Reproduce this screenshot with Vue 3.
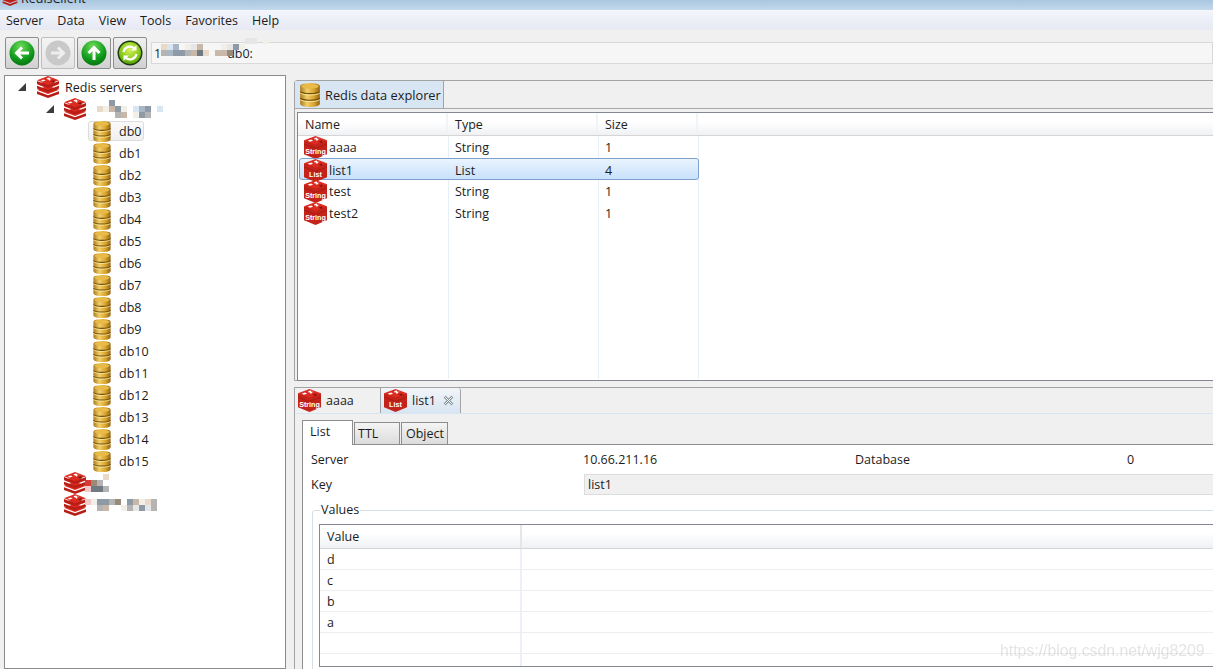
<template>
  <div class="app">
    <!-- sprite -->
    <svg class="sprite" width="0" height="0">
      <defs>
        <linearGradient id="gold" x1="0" x2="1" y1="0" y2="0">
          <stop offset="0" stop-color="#a97a1c" />
          <stop offset="0.35" stop-color="#f2cf6a" />
          <stop offset="0.7" stop-color="#d9a32e" />
          <stop offset="1" stop-color="#8f6414" />
        </linearGradient>
        <radialGradient id="greenBall" cx="0.45" cy="0.25" r="0.85">
          <stop offset="0" stop-color="#6fdc5a" />
          <stop offset="0.6" stop-color="#0f9a1c" />
          <stop offset="1" stop-color="#04660c" />
        </radialGradient>
        <radialGradient id="limeBall" cx="0.5" cy="0.35" r="0.7">
          <stop offset="0" stop-color="#d8f25a" />
          <stop offset="0.7" stop-color="#7fc414" />
          <stop offset="1" stop-color="#3d8a06" />
        </radialGradient>
      </defs>
      <symbol id="redis" viewBox="0 0 26 24">
        <path d="M1 16.500v3L13 24l12-4.500v-3L13 21z" fill="#b81e16" />
        <path d="M1 15l12-4.500 12 4.500-12 4.500z" fill="#d92a20" />
        <path d="M1 10.500v3L13 18l12-4.500v-3L13 15z" fill="#b81e16" />
        <path d="M1 9l12-4.500L25 9l-12 4.500z" fill="#d92a20" />
        <path d="M1 5.500v3L13 13l12-4.500v-3L13 10z" fill="#b81e16" />
        <path d="M1 4.500L13 0l12 4.500L13 9z" fill="#dc2c22" />
        <path d="M5 4.800l3.500-1.100 2 1.300-3.500 1.100zM12 2.200l2.500-.700.700 1.500 2-.300-2 1.400-.700 1.300-1-1.700-2-.300z" fill="#fff" />
        <path d="M16 6l4-1.600v3z" fill="#7c1610" />
      </symbol>
      <symbol id="rediskey" viewBox="0 0 26 24">
        <path d="M1 4.500v14.500L13 24l12-5V4.500z" fill="#c4231a" />
        <path d="M1 8.500L13 13l12-4.500" fill="none" stroke="#a81a13" stroke-width="1" />
        <path d="M1 4.500L13 0l12 4.500L13 9z" fill="#dc2c22" />
        <path d="M5 4.800l3.500-1.100 2 1.300-3.500 1.100zM12 2.200l2.500-.700.700 1.500 2-.300-2 1.400-.700 1.300-1-1.700-2-.300z" fill="#fff" />
        <path d="M16 6l4-1.600v3z" fill="#7c1610" />
      </symbol>
      <symbol id="db" viewBox="0 0 18 22">
        <path d="M0 3c0-4 18-4 18 0v16c0 4-18 4-18 0z" fill="url(#gold)" />
        <ellipse cx="9" cy="3" rx="8" ry="2.200" fill="#e8bb48" />
        <path d="M0 8c3 2.400 15 2.400 18 0M0 14c3 2.400 15 2.400 18 0" fill="none" stroke="#6e4c0c" stroke-width="1.100" />
        <path d="M0 9.200c3 2.400 15 2.400 18 0M0 15.200c3 2.400 15 2.400 18 0" fill="none" stroke="#fbe79a" stroke-width="0.800" />
      </symbol>
    </svg>

    <div class="titlebar">
      <svg class="title-icon"><use href="#redis" /></svg>
      <span>RedisClient</span>
    </div>

    <div class="menubar">
      <span v-for="m in menus" :key="m">{{ m }}</span>
    </div>

    <div class="toolbar">
      <button class="tool">
        <svg viewBox="0 0 26 26" width="26" height="26">
          <circle cx="13" cy="13" r="12.500" fill="url(#greenBall)" />
          <path d="M20 13H8M13 7.500L7.500 13l5.500 5.500" fill="none" stroke="#fff" stroke-width="3" />
        </svg>
      </button>
      <button class="tool off">
        <svg viewBox="0 0 26 26" width="26" height="26">
          <circle cx="13" cy="13" r="12.500" fill="#c9c9c9" />
          <path d="M6 13h12M13 7.500l5.500 5.500-5.500 5.500" fill="none" stroke="#eee" stroke-width="3" />
        </svg>
      </button>
      <button class="tool">
        <svg viewBox="0 0 26 26" width="26" height="26">
          <circle cx="13" cy="13" r="12.500" fill="url(#greenBall)" />
          <path d="M13 20V8M7.500 13L13 7.500l5.500 5.500" fill="none" stroke="#fff" stroke-width="3" />
        </svg>
      </button>
      <button class="tool">
        <svg viewBox="0 0 26 26" width="26" height="26">
          <circle cx="13" cy="13" r="12.500" fill="#1d3b12" />
          <circle cx="13" cy="13" r="11" fill="url(#limeBall)" />
          <path d="M6.500 12a6.500 6.500 0 0 1 11-3.500M19.500 14a6.500 6.500 0 0 1-11 3.500" fill="none" stroke="#fff" stroke-width="2.200" />
          <path d="M19.500 5v5.500H14zM6.500 21v-5.500H12z" fill="#fff" />
        </svg>
      </button>
      <div class="address">
        <span>1</span>
        <span class="address-end">db0:</span>
        <div class="mosaic address-blur">
          <div v-for="(r, i) in blurAddress" :key="i" class="mosaic-row">
            <i v-for="(c, j) in r" :key="j" :style="{ background: palette[c] }"></i>
          </div>
        </div>
      </div>
    </div>

    <div class="main">
      <!-- tree -->
      <div class="tree">
        <div class="node root">
          <svg class="arrow" viewBox="0 0 8 8"><path d="M8 0v8H0z" /></svg>
          <svg class="server-icon"><use href="#redis" /></svg>
          <span class="node-label">Redis servers</span>
        </div>
        <div class="node server">
          <svg class="arrow" viewBox="0 0 8 8"><path d="M8 0v8H0z" /></svg>
          <svg class="server-icon"><use href="#redis" /></svg>
          <div class="mosaic blur-one">
            <div v-for="(r, i) in blurOne" :key="i" class="mosaic-row">
              <i v-for="(c, j) in r" :key="j" :style="{ background: palette[c] }"></i>
            </div>
          </div>
        </div>
        <div v-for="(d, i) in dbs" :key="d" class="node db">
          <div class="db-item" :class="{ current: i === 0 }">
            <svg class="db-icon"><use href="#db" /></svg>
            <span>{{ d }}</span>
          </div>
        </div>
        <div class="node server closed">
          <svg class="server-icon"><use href="#redis" /></svg>
          <div class="mosaic">
            <div v-for="(r, i) in blurTwo" :key="i" class="mosaic-row">
              <i v-for="(c, j) in r" :key="j" :style="{ background: palette[c] }"></i>
            </div>
          </div>
        </div>
        <div class="node server closed">
          <svg class="server-icon"><use href="#redis" /></svg>
          <div class="mosaic">
            <div v-for="(r, i) in blurThree" :key="i" class="mosaic-row">
              <i v-for="(c, j) in r" :key="j" :style="{ background: palette[c] }"></i>
            </div>
          </div>
        </div>
      </div>

      <div class="right">
        <!-- data explorer -->
        <div class="explorer">
          <div class="tabbar">
            <div class="tab active">
              <svg class="tab-db"><use href="#db" /></svg>
              <span>Redis data explorer</span>
            </div>
          </div>
          <div class="keys">
            <div class="keys-row keys-head">
              <div>Name</div>
              <div>Type</div>
              <div>Size</div>
              <div></div>
            </div>
            <div class="keys-body">
              <div class="guide" style="left: 150px"></div>
              <div class="guide" style="left: 300px"></div>
              <div class="guide" style="left: 400px"></div>
              <div v-for="k in keys" :key="k.name" class="keys-row" :class="{ picked: k.name === 'list1' }">
                <div class="key-name">
                  <svg class="key-icon" viewBox="0 0 26 24">
                    <use href="#rediskey" width="26" height="24" />
                    <text x="13" y="19" text-anchor="middle">{{ k.type }}</text>
                  </svg>
                  {{ k.name }}
                </div>
                <div>{{ k.type }}</div>
                <div>{{ k.size }}</div>
              </div>
            </div>
          </div>
        </div>

        <!-- key tabs -->
        <div class="detail">
          <div class="tabbar key-tabs">
            <div class="tab key-tab">
              <svg class="key-tab-icon" viewBox="0 0 26 24">
                <use href="#rediskey" width="26" height="24" />
                <text x="13" y="19" text-anchor="middle">String</text>
              </svg>
              <span>aaaa</span>
            </div>
            <div class="tab key-tab active">
              <svg class="key-tab-icon" viewBox="0 0 26 24">
                <use href="#rediskey" width="26" height="24" />
                <text x="13" y="19" text-anchor="middle">List</text>
              </svg>
              <span>list1</span>
              <svg class="close" viewBox="0 0 11 11" width="11" height="11">
                <path d="M1.500 1.500l8 8M9.500 1.500l-8 8" stroke="#8a949c" stroke-width="2.600" fill="none" />
                <path d="M1.500 1.500l8 8M9.500 1.500l-8 8" stroke="#f4f6f8" stroke-width="1" fill="none" />
              </svg>
            </div>
          </div>
          <div class="detail-body">
            <div class="subtabs">
              <div class="subtab on">List</div>
              <div class="subtab">TTL</div>
              <div class="subtab">Object</div>
            </div>
            <div class="pane">
              <div class="info">
                <span>Server</span>
                <span>10.66.211.16</span>
                <span>Database</span>
                <span>0</span>
              </div>
              <div class="key-line">
                <span>Key</span>
                <div class="key-input">list1</div>
              </div>
              <fieldset class="values">
                <legend>Values</legend>
                <div class="value-table">
                  <div class="value-row value-head">
                    <div>Value</div>
                    <div></div>
                  </div>
                  <div v-for="(v, i) in values" :key="i" class="value-row">
                    <div>{{ v }}</div>
                    <div></div>
                  </div>
                </div>
              </fieldset>
            </div>
          </div>
        </div>
      </div>
    </div>

    <div class="watermark">https://blog.csdn.net/wjg8209</div>
  </div>
</template>

<script setup>
const menus = ['Server', 'Data', 'View', 'Tools', 'Favorites', 'Help']
const dbs = Array.from({ length: 16 }, (_, i) => 'db' + i)
const keys = [
  { name: 'aaaa', type: 'String', size: 1 },
  { name: 'list1', type: 'List', size: 4 },
  { name: 'test', type: 'String', size: 1 },
  { name: 'test2', type: 'String', size: 1 }
]
const values = ['d', 'c', 'b', 'a', '', '']

// colores del pixelado
const palette = {
  '.': 'transparent',
  a: '#e8d9c8',
  b: '#a9b6c6',
  c: '#8e9aa6',
  d: '#c9b8a8',
  e: '#d8e6f4',
  f: '#6f7a82',
  g: '#f2efe8',
  h: '#b4b4b4',
  r: '#d63a34',
  p: '#f2c8c8',
  k: '#e6e6e6',
  m: '#9a8a78'
}
const blurAddress = [
  '..............kk.g'.split(''),
  'aeb.gkd...gkcg....'.split(''),
  'hbcchdfa.ddm......'.split('')
]
const blurOne = [
  '..c.........'.split(''),
  'agdcg.ebc.e.'.split(''),
  '...hd.gch...'.split('')
]
const blurTwo = [
  '...a'.split(''),
  'rmh.'.split(''),
  'pffh'.split('')
]
const blurThree = [
  'pgcchm.cdgah.'.split(''),
  '..hd..ghkckh.'.split('')
]
</script>

<style scoped>
.app {
  position: relative;
  width: 1213px;
  height: 669px;
  overflow: hidden;
  background: #f0f0f0;
  font-family: "Open Sans", "Noto Sans", sans-serif;
  font-size: 12.5px;
  color: #1c1c1c;
}

.sprite {
  position: absolute;
}

.titlebar {
  height: 11px;
  display: flex;
  align-items: flex-start;
  gap: 3px;
  padding-left: 2px;
  overflow: hidden;
  background: linear-gradient(#a9c6e0, #c3d8ec);
  border-bottom: 1px solid #f4f7fb;
  box-sizing: border-box;
}

.titlebar span {
  line-height: 14px;
  margin-top: -8px;
}

.title-icon {
  width: 16px;
  height: 15px;
  margin-top: -9px;
  flex: none;
}

.menubar {
  height: 19px;
  display: flex;
  align-items: center;
  gap: 14px;
  padding-left: 6px;
  background: linear-gradient(#f3f4fb, #e6e9f3);
}

.toolbar {
  height: 45px;
  box-sizing: border-box;
  display: flex;
  align-items: flex-start;
  gap: 2px;
  padding: 7px 0 0 5px;
}

.tool {
  width: 34px;
  height: 32px;
  padding: 0;
  display: flex;
  align-items: center;
  justify-content: center;
  border: 1px solid #8d8d8d;
  border-radius: 2px;
  background: linear-gradient(#f0f0f0, #d0d0d0);
}

.tool.off {
  border-color: #bdbdbd;
  background: linear-gradient(#f4f4f4, #e4e4e4);
}

.address {
  position: relative;
  flex: 1;
  height: 20px;
  margin: 5px 0 0 2px;
  display: flex;
  align-items: center;
  padding-left: 2px;
  border: 1px solid #d9d9d9;
  background: #f6f6f6;
  white-space: nowrap;
}

.mosaic-row {
  display: flex;
}

.mosaic-row i {
  display: block;
  width: 6px;
  height: 6px;
}

/* el pixelado va encima de la direccion */
.address-blur {
  position: absolute;
  left: 9px;
  top: -5px;
}

.address-end {
  margin-left: 66px;
}

.main {
  display: flex;
  height: 594px;
}

.tree {
  width: 282px;
  margin-left: 4px;
  box-sizing: border-box;
  background: #fff;
  border: 1px solid #8b8b8b;
  flex: none;
}

.node {
  height: 22px;
  display: flex;
  align-items: center;
}

.arrow {
  width: 8px;
  height: 8px;
  fill: #3c3c3c;
  flex: none;
}

.server-icon {
  width: 24px;
  height: 22px;
  flex: none;
}

.node-label {
  margin-left: 5px;
}

.root {
  padding-left: 13px;
}

.root .server-icon {
  margin-left: 10px;
}

.server {
  padding-left: 41px;
}

.server .server-icon {
  margin-left: 9px;
}

.server .mosaic {
  margin-left: -2px;
}

.server .blur-one {
  margin-left: 10px;
}

.closed {
  padding-left: 58px;
}

.closed .server-icon {
  margin-left: 0;
}

.db {
  padding-left: 83px;
}

.db-item {
  height: 20px;
  width: 56px;
  box-sizing: border-box;
  display: flex;
  align-items: center;
  gap: 8px;
  padding-left: 4px;
  border: 1px solid transparent;
  border-radius: 3px;
}

.db-item.current {
  border-color: #dcdcdc;
  background: linear-gradient(#fafafa, #f0f0f0);
}

.db-icon {
  width: 18px;
  height: 21px;
  flex: none;
}

.right {
  flex: 1;
  margin: 0 -10px 0 8px;
  min-width: 0;
}

.explorer {
  margin-top: 5px;
  height: 301px;
  box-sizing: border-box;
  border: 1px solid #a3a3a3;
  border-radius: 3px 0 0 0;
  background: #f0f0f0;
}

.tabbar {
  display: flex;
  height: 27px;
  border-bottom: 1px solid #a8a8a8;
}

.tab {
  display: flex;
  align-items: center;
  box-sizing: border-box;
  height: 28px;
  white-space: nowrap;
}

.tab.active {
  background: #d8e5f2;
  border-right: 1px solid #a3a3a3;
}

.explorer .tab {
  width: 149px;
  gap: 5px;
  padding-left: 5px;
  font-size: 12.8px;
  border-bottom: 1px solid #a8a8a8;
}

.tab-db {
  width: 20px;
  height: 24px;
  flex: none;
}

.keys {
  margin: 3px 0 0 2px;
  height: 267px;
  border: 1px solid #828790;
  background: #fff;
}

.keys-row {
  display: grid;
  grid-template-columns: 150px 150px 100px 1fr;
  height: 22px;
  align-items: center;
  position: relative;
}

.keys-row > div {
  padding-left: 7px;
}

.keys-head {
  height: 23px;
  background: linear-gradient(#fff, #fff 40%, #eff1f4);
  border-bottom: 1px solid #d5d5d5;
  box-sizing: border-box;
}

.keys-head > div {
  height: 100%;
  display: flex;
  align-items: center;
  box-sizing: border-box;
  border-right: 2px solid #f2f3f6;
}

.keys-body {
  position: relative;
  height: 243px;
}

.guide {
  position: absolute;
  top: 0;
  bottom: 0;
  width: 1px;
  background: #e6eef8;
}

.keys-body > .keys-row {
  width: 400px;
  grid-template-columns: 150px 150px 100px;
}

.keys-body > .picked {
  box-sizing: border-box;
  margin-left: 1px;
  grid-template-columns: 148px 150px 100px;
  border: 1px solid #7da2ce;
  border-radius: 3px;
  background: linear-gradient(#eaf4fe, #c8e1fb);
}

.keys-body > .keys-row > .key-name {
  padding-left: 5px;
  display: flex;
  align-items: center;
  gap: 1px;
}

.keys-body > .picked > .key-name {
  padding-left: 3px;
}

.key-icon {
  width: 25px;
  height: 23px;
  flex: none;
}

.key-icon text,
.key-tab-icon text {
  font-family: "Liberation Sans", sans-serif;
  font-size: 7.500px;
  font-weight: 700;
  fill: #fff;
}

.detail {
  margin-top: 6px;
  border-left: 1px solid #a3a3a3;
  border-top: 1px solid #a3a3a3;
  height: 300px;
  background: #f0f0f0;
}

.key-tabs {
  height: 25px;
  border-bottom: none;
  background: #f0f0f0;
}

.key-tab {
  height: 25px;
  width: 86px;
  gap: 4px;
  padding-left: 2px;
  border-right: 1px solid #a3a3a3;
}

.key-tab.active {
  width: 80px;
  background: linear-gradient(#f2f5f9, #d8e5f2);
  border-radius: 3px 3px 0 0;
}

.key-tab-icon {
  width: 25px;
  height: 23px;
  flex: none;
}

.close {
  margin-left: 3px;
}

.detail-body {
  padding: 6px 0 0 7px;
  border-top: 1px solid #d8e5f2;
  background: #f0f0f0;
}

.subtabs {
  display: flex;
  align-items: flex-end;
  height: 24px;
  gap: 1px;
}

.subtab {
  height: 22px;
  padding: 0 3px 0 3px;
  width: 46px;
  box-sizing: border-box;
  display: flex;
  align-items: center;
  border: 1px solid #8d8d8d;
  border-bottom: none;
  background: linear-gradient(#f4f4f4, #dcdcdc);
}

.subtab:last-child {
  width: 47px;
  padding-left: 4px;
}

.subtab.on {
  height: 25px;
  width: 51px;
  margin-bottom: -1px;
  padding: 0 0 3px 7px;
  background: #fff;
  position: relative;
  z-index: 1;
}

.pane {
  background: #fff;
  border: 1px solid #8d8d8d;
  padding: 5px 0 0 8px;
  height: 225px;
}

.info {
  display: grid;
  grid-template-columns: 272px 272px 272px 1fr;
  height: 18px;
  align-items: center;
}

.key-line {
  display: grid;
  grid-template-columns: 273px 1fr;
  align-items: center;
  height: 22px;
  margin-top: 5px;
}

.key-input {
  height: 21px;
  box-sizing: border-box;
  padding-left: 3px;
  display: flex;
  align-items: center;
  background: #f0f0f0;
  border: 1px solid #dcdcdc;
}

.values {
  margin: 6px 0 0 1px;
  padding: 5px 0 0 6px;
  border: 1px solid #d5dfe5;
  border-radius: 3px;
  height: 200px;
  box-sizing: border-box;
  min-width: 0;
}

.values legend {
  padding: 0 1px;
  margin-left: 1px;
  line-height: 18px;
}

.value-table {
  border: 1px solid #828790;
  height: 143px;
  overflow: hidden;
  box-sizing: border-box;
  width: 1000px;
  background: #fff;
}

.value-row {
  display: grid;
  grid-template-columns: 202px 1fr;
  height: 21px;
  align-items: center;
  border-bottom: 1px solid #eeeeee;
  box-sizing: border-box;
}

.value-row > div:first-child {
  height: 100%;
  display: flex;
  align-items: center;
  padding-left: 7px;
  box-sizing: border-box;
  border-right: 2px solid #ebf0f7;
}

.value-head {
  height: 24px;
  background: linear-gradient(#fff, #fff 35%, #eff1f4);
  border-bottom: 1px solid #d5d5d5;
}

.value-head > div:first-child {
  border-right-color: #e6e6e6;
}

.watermark {
  position: absolute;
  left: 1000px;
  top: 642px;
  font-family: "Liberation Sans", sans-serif;
  font-size: 15.800px;
  color: rgba(120, 120, 120, 0.2);
  filter: blur(0.6px);
}
</style>

<style>
body {
  overflow: hidden;
}
</style>
